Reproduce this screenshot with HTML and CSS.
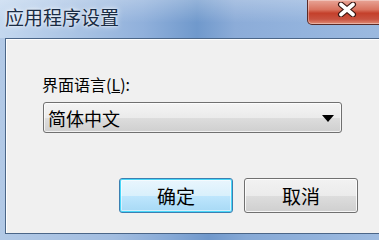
FILE: index.html
```html
<!DOCTYPE html>
<html lang="zh-CN">
<head>
<meta charset="utf-8">
<title>应用程序设置</title>
<link rel="stylesheet" href="styles.css">
</head>
<body>
<div class="window">
  <div class="titlebar">
    <div class="title">应用程序设置</div>
    <div class="close">
      <svg class="close-x" width="20" height="15" viewBox="0 0 20 15">
        <path d="M4 2.5L16 12.5M16 2.5L4 12.5" stroke="#3b1712" stroke-width="6" stroke-linecap="round" fill="none"/>
        <path d="M4 2.5L16 12.5M16 2.5L4 12.5" stroke="#ffffff" stroke-width="3.6" stroke-linecap="round" fill="none"/>
      </svg>
    </div>
  </div>
  <div class="frame">
    <div class="panel">
      <div class="label">界面语言(<u>L</u>):</div>
      <div class="combo">
        <span class="combo-text">简体中文</span>
        <svg class="arrow" width="12" height="7" viewBox="0 0 12 7"><path d="M0 0H12L6 7Z" fill="#000"/></svg>
      </div>
      <div class="buttons">
        <div class="btn btn-default">确定</div>
        <div class="btn">取消</div>
      </div>
    </div>
  </div>
</div>
</body>
</html>
```
FILE: styles.css
```css
html, body {
  margin: 0;
  padding: 0;
}
body {
  width: 379px;
  height: 240px;
  overflow: hidden;
  font-family: "Noto Sans CJK SC", "Noto Sans", sans-serif;
}
.window {
  width: 379px;
  height: 240px;
  display: flex;
  flex-direction: column;
  overflow: hidden;
  background: linear-gradient(90deg, #b2c9e6 0%, #a2bde0 30%, #86a9d6 45%, #7098cb 55%, #86a9d6 65%, #93b3dc 85%, #9fbce1 100%);
}
.titlebar {
  height: 38px;
  flex: none;
  display: flex;
  justify-content: space-between;
  align-items: flex-start;
  background:
    linear-gradient(180deg, rgba(255,255,255,0.25) 0%, rgba(255,255,255,0) 60%),
    linear-gradient(90deg, #c4d8ef 0%, #a9c3e4 20%, #90b0db 38%, #7099cc 52%, #8cacd8 62%, #93b3dd 80%, #9bb9df 100%);
}
.title {
  padding: 5px 0 0 5px;
  font-size: 19px;
  line-height: 24px;
  color: #1a2c44;
  text-shadow: 0 0 6px rgba(255,255,255,0.9), 0 0 3px rgba(255,255,255,0.8);
}
.close {
  width: 80px;
  height: 25px;
  margin-right: -8px;
  box-sizing: border-box;
  border: 1px solid #5a2a26;
  border-top: none;
  border-radius: 0 0 5px 5px;
  background: linear-gradient(180deg, #e8a597 0%, #d9735f 40%, #c4402b 55%, #c85240 80%, #e08c76 100%);
  box-shadow: inset 0 0 0 1px rgba(255,255,255,0.35);
  display: flex;
  justify-content: center;
  align-items: flex-start;
  padding: 2px 0 0 0;
}
.close-x {
  display: block;
}
.frame {
  flex: 1;
  padding: 0 0 6px 5px;
  display: flex;
}
.panel {
  flex: 1;
  margin-right: -10px;
  background: #f0f0f0;
  border-top: 1px solid #4b6688;
  border-left: 1px solid #4b6688;
  border-bottom: 1px solid #4b6688;
  box-shadow: inset 1px 1px 0 #ffffff;
  padding: 37px 0 0 36px;
  display: flex;
  flex-direction: column;
  align-items: flex-start;
}
.label {
  font-size: 16px;
  line-height: 17px;
  color: #000;
}
.label u {
  text-decoration: underline;
  text-underline-offset: 1px;
}
.combo {
  margin: 9px 0 0 1px;
  width: 299px;
  height: 31px;
  box-sizing: border-box;
  border: 1px solid #707070;
  border-radius: 3px;
  background: linear-gradient(180deg, #f4f4f4 0%, #ebebeb 50%, #dddddd 51%, #cfcfcf 100%);
  box-shadow: inset 0 0 0 1px rgba(255,255,255,0.7);
  display: flex;
  align-items: center;
  justify-content: space-between;
  padding: 0 7px 0 4px;
}
.combo-text {
  font-size: 18px;
  line-height: 22px;
  color: #000;
}
.arrow {
  display: block;
  margin-top: 1px;
}
.buttons {
  margin: 45px 0 0 77px;
  display: flex;
  gap: 11px;
}
.btn {
  width: 114px;
  height: 35px;
  box-sizing: border-box;
  border: 1px solid #707070;
  border-radius: 3px;
  background: linear-gradient(180deg, #f2f2f2 0%, #ebebeb 50%, #dddddd 51%, #cfcfcf 100%);
  box-shadow: inset 0 0 0 1px rgba(255,255,255,0.8);
  display: flex;
  align-items: center;
  justify-content: center;
  font-size: 19px;
  line-height: 22px;
  color: #000;
}
.btn-default {
  border-color: #3c7fb1;
  background: linear-gradient(180deg, #eaf6fd 0%, #d9f0fc 50%, #bee6fd 51%, #a7d9f5 100%);
  box-shadow: inset 0 0 0 1px #48d7f9, inset 0 0 0 2px rgba(255,255,255,0.5);
}
```
